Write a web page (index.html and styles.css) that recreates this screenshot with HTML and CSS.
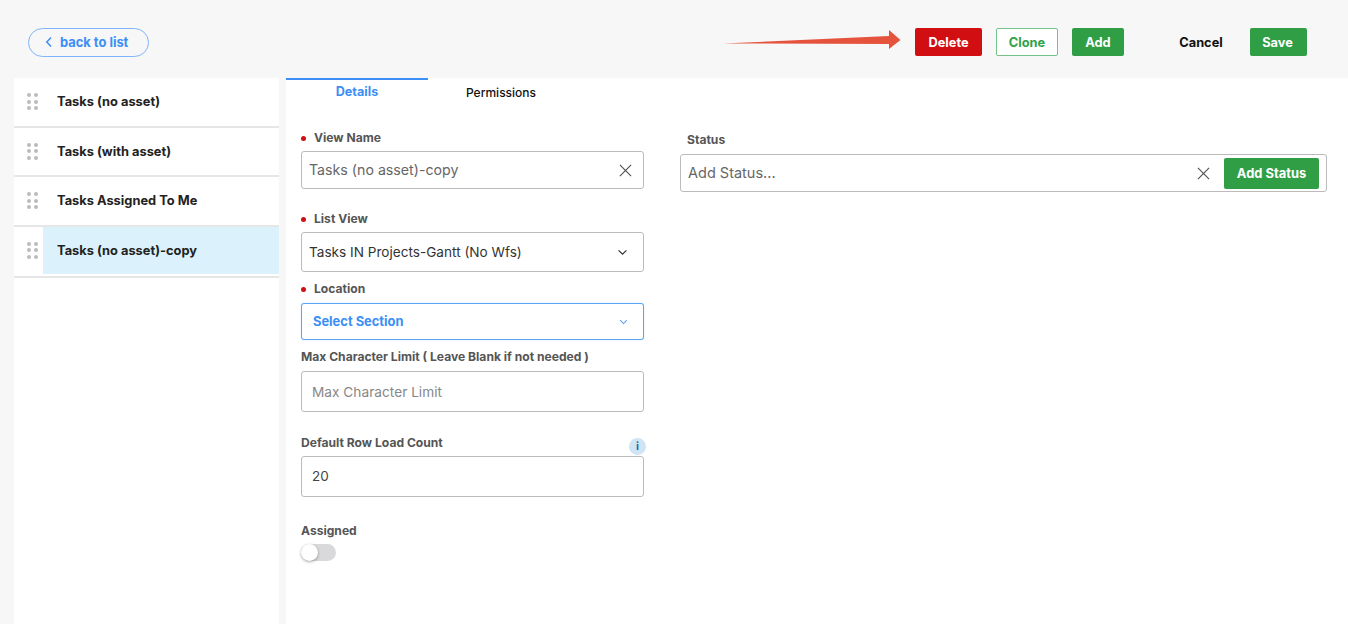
FILE: index.html
```html
<!DOCTYPE html>
<html lang="en">
<head>
<meta charset="utf-8">
<title>Edit view</title>
<link rel="stylesheet" href="styles.css">
</head>
<body>
<header class="topbar">
  <a class="back"><svg class="back-icon" viewBox="0 0 8 12"><path d="M6 1.500 1.800 6 6 10.500"/></svg>back to list</a>
  <div class="actions">
    <button class="btn btn-delete">Delete</button>
    <button class="btn btn-clone">Clone</button>
    <button class="btn btn-add">Add</button>
    <button class="btn btn-cancel">Cancel</button>
    <button class="btn btn-save">Save</button>
  </div>
  <svg class="arrow" viewBox="0 0 180 20"><path d="M0 13.500 166 6 166 0 177.500 10 166 19 166 14Z"/></svg>
</header>
<div class="layout">
  <aside class="sidebar">
    <div class="item"><span class="grip"><i></i><i></i><i></i><i></i><i></i><i></i></span><span class="item-label">Tasks (no asset)</span></div>
    <div class="item"><span class="grip"><i></i><i></i><i></i><i></i><i></i><i></i></span><span class="item-label">Tasks (with asset)</span></div>
    <div class="item"><span class="grip"><i></i><i></i><i></i><i></i><i></i><i></i></span><span class="item-label">Tasks Assigned To Me</span></div>
    <div class="item item-active"><span class="grip"><i></i><i></i><i></i><i></i><i></i><i></i></span><span class="item-label">Tasks (no asset)-copy</span></div>
  </aside>
  <main class="panel">
    <nav class="tabs">
      <div class="tab tab-active">Details</div>
      <div class="tab">Permissions</div>
    </nav>
    <div class="columns">
      <section class="form">
        <label class="label label-name req">View Name</label>
        <div class="control control-name"><span class="value">Tasks (no asset)-copy</span><svg class="x" viewBox="0 0 14 14"><path d="M1 1 13 13M13 1 1 13"/></svg></div>
        <label class="label label-list req">List View</label>
        <div class="control control-list"><span class="value-dark">Tasks IN Projects-Gantt (No Wfs)</span><svg class="chev" viewBox="0 0 12 8"><path d="M1.500 1.500 6 6 10.500 1.500"/></svg></div>
        <label class="label label-loc req">Location</label>
        <div class="control control-loc"><span class="value-blue">Select Section</span><svg class="chev chev-blue" viewBox="0 0 12 8"><path d="M1.500 1.500 6 6 10.500 1.500"/></svg></div>
        <label class="label label-max">Max Character Limit ( Leave Blank if not needed )</label>
        <div class="control control-max"><span class="placeholder">Max Character Limit</span></div>
        <div class="label-row">
          <label class="label">Default Row Load Count</label>
          <span class="info">i</span>
        </div>
        <div class="control control-max"><span class="value value-num">20</span></div>
        <label class="label label-assigned">Assigned</label>
        <div class="toggle"><span class="knob"></span></div>
      </section>
      <section class="status">
        <label class="label label-status">Status</label>
        <div class="status-box"><span class="value status-text">Add Status...</span><svg class="x" viewBox="0 0 14 14"><path d="M1 1 13 13M13 1 1 13"/></svg><button class="btn btn-status">Add Status</button></div>
      </section>
    </div>
  </main>
</div>
</body>
</html>
```
FILE: styles.css
```css
* { box-sizing: border-box; }
html, body { height: 100%; }
body {
  margin: 0;
  height: 624px;
  overflow: hidden;
  background: #f7f7f7;
  font-family: Inter, "Liberation Sans", sans-serif;
  color: #222;
}
.topbar {
  position: relative;
  height: 78px;
  display: flex;
  align-items: center;
  justify-content: space-between;
  padding: 6px 41px 0 28px;
}
.back {
  width: 121px;
  height: 29px;
  display: flex;
  align-items: center;
  padding-left: 16px;
  border: 1.500px solid #7db5ff;
  border-radius: 15px;
  color: #3b8ff5;
  font-size: 12.900px;
  font-weight: 700;
}
.back-icon {
  width: 8px;
  height: 12px;
  margin-right: 7px;
  fill: none;
  stroke: #3b8ff5;
  stroke-width: 1.500;
}
.actions { display: flex; align-items: center; }
.btn {
  height: 28px;
  padding: 1px 0 0;
  border: 1px solid transparent;
  border-radius: 2px;
  font-family: inherit;
  font-size: 12.800px;
  font-weight: 700;
  color: #fff;
}
.btn-delete { width: 67px; background: #d10e11; margin-right: 14px; }
.btn-clone { width: 62px; background: #fff; color: #30a24a; border-color: #74c488; margin-right: 14px; }
.btn-add { width: 52px; background: #2f9e44; margin-right: 44px; }
.btn-cancel { width: 66px; background: transparent; color: #111; margin-right: 16px; }
.btn-save { width: 57px; background: #2f9e44; padding-right: 2px; }
.arrow {
  position: absolute;
  left: 723px;
  top: 30px;
  width: 180px;
  height: 20px;
  fill: #e5533d;
}
.layout { display: flex; height: 546px; padding-left: 14px; }
.sidebar { width: 265px; background: #fff; flex: none; }
.item {
  height: 49.500px;
  display: flex;
  align-items: center;
  border-bottom: 2px solid #e6e6e6;
  font-size: 12.850px;
  font-weight: 700;
  color: #222;
}
.item-active { height: 51px; padding-bottom: 2px; }
.grip {
  width: 29px;
  flex: none;
  height: 100%;
  display: grid;
  grid-template-columns: 4px 4px;
  grid-auto-rows: 4px;
  gap: 2.500px;
  padding-left: 13px;
  align-content: center;
}
.grip i { width: 4.200px; height: 4.200px; border-radius: 50%; background: #bbb; }
.item-label { padding-left: 14px; flex: 1; height: 100%; display: flex; align-items: center; }
.item-active .item-label { background: #dbf2fd; }
.panel { flex: 1; margin-left: 7px; background: #fff; padding-left: 15px; }
.tabs { display: flex; height: 30px; margin-left: -15px; }
.tab { width: 142px; text-align: center; font-size: 12px; font-weight: 500; color: #111; padding-top: 7px; line-height: 15px; }
.tab-active { border-top: 2px solid #3b8ff5; color: #3b8ff5; font-size: 12.600px; font-weight: 700; padding-top: 4px; margin-right: 2px; }
.columns { display: flex; }
.form { width: 343px; flex: none; }
.status { width: 647px; margin-left: 36px; }
.label {
  display: block;
  font-size: 12.100px;
  font-weight: 700;
  color: #555;
  line-height: 14px;
}
.req { padding-left: 13px; position: relative; }
.req::before {
  content: "";
  position: absolute;
  left: 0;
  top: 5px;
  width: 5px;
  height: 5px;
  border-radius: 50%;
  background: #d10e11;
}
.label-name { margin-top: 23px; }
.label-list { margin-top: 23px; }
.label-loc { margin-top: 10px; }
.label-max { margin-top: 10px; }
.label-assigned { margin-top: 27px; }
.label-status { margin: 25px 0 7px 7px; }
.control {
  display: flex;
  align-items: center;
  justify-content: space-between;
  border: 1px solid #bbb;
  border-radius: 3px;
  background: #fff;
  margin-top: 6px;
  padding: 0 10px 0 7px;
}
.control-name { height: 38px; }
.control-list { height: 40px; }
.control-loc { height: 37px; margin-top: 7px; border-color: #5fa5f7; padding-left: 11px; box-shadow: 0 0 1px #8fc0fa; }
.control-max { height: 41px; margin-top: 7px; padding-left: 10px; }
.value { font-size: 14.200px; color: #666; padding-bottom: 2px; }
.value-dark { font-size: 13.600px; color: #333; }
.value-blue { font-size: 12.900px; font-weight: 700; color: #3b8ff5; }
.placeholder { font-size: 13.700px; color: #888; }
.value-num { font-size: 13.500px; color: #444; }
.x { width: 13px; height: 13px; margin-right: 1px; fill: none; stroke: #555; stroke-width: 1.300; }
.chev { width: 11px; height: 7px; margin-right: 5px; fill: none; stroke: #333; stroke-width: 1.400; }
.chev-blue { width: 9px; height: 6px; stroke: #5a9ff2; }
.label-row { position: relative; margin-top: 23px; height: 21px; margin-bottom: -7px; padding-top: 1px; }
.info {
  position: absolute;
  right: -2px;
  top: 3px;
  width: 17px;
  height: 17px;
  border-radius: 50%;
  background: #cfe4f5;
  color: #2a6d9c;
  font-size: 11px;
  font-weight: 700;
  line-height: 17px;
  text-align: center;
}
.toggle {
  position: relative;
  width: 35px;
  height: 17px;
  margin-top: 6px;
  border-radius: 9px;
  background: #d9d9dc;
}
.knob {
  position: absolute;
  left: 0;
  top: 0;
  width: 17px;
  height: 17px;
  border-radius: 50%;
  background: #fff;
  box-shadow: 0 1px 3px rgba(0,0,0,.35);
}
.status-box {
  height: 38px;
  display: flex;
  align-items: center;
  border: 1px solid #bbb;
  border-radius: 3px;
  padding: 0 7px;
}
.status-box .value { font-size: 14.500px; }
.status-text { flex: 1; }
.status-box .x { margin-right: 14px; }
.btn-status { width: 95px; height: 31px; background: #2f9e44; font-size: 12.900px; }
```
